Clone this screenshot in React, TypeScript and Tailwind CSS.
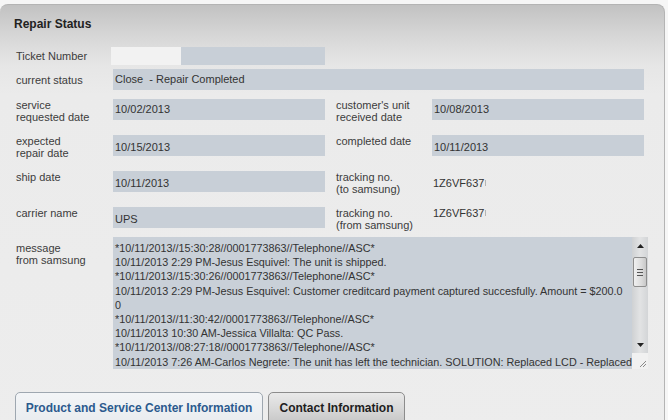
import React from "react";

const field = "bg-[#c8cfd7] text-[#333] pl-[2px] flex items-center";

function Label({ children, w = "w-[97px]", cls = "" }: { children: React.ReactNode; w?: string; cls?: string }) {
  return <div className={`${w} shrink-0 text-[#3c3c3c] leading-[12px] ${cls}`}>{children}</div>;
}

function Arrow({ up }: { up: boolean }) {
  return (
    <svg width="7" height="4" viewBox="0 0 7 4">
      {up ? <polygon points="0,4 7,4 3.5,0" fill="#222" /> : <polygon points="0,0 7,0 3.5,4" fill="#222" />}
    </svg>
  );
}

function Tracking({ cls }: { cls: string }) {
  return (
    <div className={`flex items-center pl-[1px] leading-[14px] text-[#333] ${cls}`}>
      <span>1Z6VF637</span>
      <span className="ml-[1px] h-[6px] w-[1px] bg-[#b5b5b5]" />
    </div>
  );
}

export default function App() {
  const lines = [
    "*10/11/2013//15:30:28//0001773863//Telephone//ASC*",
    "10/11/2013 2:29 PM-Jesus Esquivel: The unit is shipped.",
    "*10/11/2013//15:30:26//0001773863//Telephone//ASC*",
    "10/11/2013 2:29 PM-Jesus Esquivel: Customer creditcard payment captured succesfully. Amount = $200.0",
    "0",
    "*10/11/2013//11:30:42//0001773863//Telephone//ASC*",
    "10/11/2013 10:30 AM-Jessica Villalta: QC Pass.",
    "*10/11/2013//08:27:18//0001773863//Telephone//ASC*",
    "10/11/2013 7:26 AM-Carlos Negrete: The unit has left the technician. SOLUTION: Replaced LCD - Replaced",
  ];
  return (
    <div className="h-[420px] w-[668px] overflow-hidden bg-[#f6f6f6] pt-[4px] pr-[3px] text-[11px] [font-family:'Liberation_Sans',Arial,sans-serif]">
      <div className="h-[440px] rounded-t-[8px] border-t border-r border-[#b4b4b4] bg-[linear-gradient(to_bottom,#c2c2c2_0px,#d6d6d6_30px,#e6e6e6_60px,#ebebeb_90px,#ededed_100%)] pl-[14px] pt-[12px]">
        <div className="text-[12px] font-bold leading-[14px] text-[#222]">Repair Status</div>

        <div className="pl-[2px]">
          {/* Ticket */}
          <div className="mt-[16px] flex h-[18px] items-center">
            <Label w="w-[95px]">Ticket Number</Label>
            <div className="h-[18px] w-[70px] bg-[#f2f2f2]" />
            <div className="h-[18px] w-[144px] bg-[#c8cfd7]" />
          </div>

          {/* Status */}
          <div className="mt-[4px] flex h-[21px] items-center">
            <Label>current status</Label>
            <div className={`${field} h-[21px] w-[531px] whitespace-pre`}>Close  - Repair Completed</div>
          </div>

          {/* Service */}
          <div className="mt-[9px] flex h-[21px] items-start">
            <Label>service<br />requested date</Label>
            <div className={`${field} h-[21px] w-[212px]`}>10/02/2013</div>
            <div className="w-[11px]" />
            <Label w="w-[96px]">customer's unit<br />received date</Label>
            <div className={`${field} h-[21px] w-[212px] pl-[1px]`}>10/08/2013</div>
          </div>

          {/* Expected */}
          <div className="mt-[15px] flex h-[21px] items-start">
            <Label>expected<br />repair date</Label>
            <div className={`${field} h-[21px] w-[212px] pt-[3px]`}>10/15/2013</div>
            <div className="w-[11px]" />
            <Label w="w-[96px]">completed date</Label>
            <div className={`${field} h-[21px] w-[212px] pl-[1px] pt-[3px]`}>10/11/2013</div>
          </div>

          {/* Ship */}
          <div className="mt-[15px] flex h-[21px] items-start">
            <Label>ship date</Label>
            <div className={`${field} h-[21px] w-[212px] pt-[3px]`}>10/11/2013</div>
            <div className="w-[11px]" />
            <Label w="w-[96px]">tracking no.<br />(to samsung)</Label>
            <Tracking cls="mt-[5px]" />
          </div>

          {/* Carrier */}
          <div className="mt-[15px] flex h-[21px] items-start">
            <Label>carrier name</Label>
            <div className={`${field} h-[21px] w-[212px] pt-[3px]`}>UPS</div>
            <div className="w-[11px]" />
            <Label w="w-[96px]">tracking no.<br />(from samsung)</Label>
            <Tracking cls="-mt-[1px]" />
          </div>

          {/* Message */}
          <div className="mt-[9px] flex items-start">
            <Label cls="pt-[5px]">message<br />from samsung</Label>
            <div className="flex h-[132px] w-[535px] bg-[#c9d0d8]">
              <div className="min-w-0 flex-1 overflow-hidden whitespace-pre pl-[2px] pt-[4px] text-[10.8px] leading-[14.2px] text-[#333]">
                {lines.map((l, i) => (
                  <div key={i}>{l}</div>
                ))}
              </div>
              <div className="flex w-[16px] shrink-0 flex-col bg-[linear-gradient(to_right,#cfd1d3,#e2e3e4_50%,#d3d5d7)]">
                <div className="flex h-[17px] items-center justify-center">
                  <Arrow up />
                </div>
                <div className="mx-[1px] mt-[3px] flex h-[30px] flex-col items-center justify-center gap-[2px] rounded-[2px] border border-[#8e8e8e] bg-[linear-gradient(to_right,#f0f0f0,#dcdcdc_60%,#c8c8c8)]">
                  <div className="h-[1px] w-[6px] bg-[#555]" />
                  <div className="h-[1px] w-[6px] bg-[#555]" />
                  <div className="h-[1px] w-[6px] bg-[#555]" />
                </div>
                <div className="flex-1" />
                <div className="flex h-[16px] items-center justify-center">
                  <Arrow up={false} />
                </div>
                <div className="relative h-[16px] bg-[#f1f1f1]">
                  <svg className="absolute bottom-[1px] right-[1px]" width="9" height="9" viewBox="0 0 9 9">
                    <line x1="8" y1="2" x2="2" y2="8" stroke="#8a8a8a" strokeWidth="1" />
                    <line x1="8" y1="5" x2="5" y2="8" stroke="#8a8a8a" strokeWidth="1" />
                  </svg>
                </div>
              </div>
            </div>
          </div>
        </div>

        {/* Tabs */}
        <div className="ml-[1px] mt-[23px] flex gap-[5px]">
          <div className="h-[34px] w-[248px] rounded-t-[5px] border border-[#9ea7b0] bg-[linear-gradient(to_bottom,#f3f5f7,#e8ebee)] pt-[8px] text-center text-[12px] font-bold leading-[14px] text-[#2b5a8e]">
            Product and Service Center Information
          </div>
          <div className="h-[34px] w-[137px] rounded-t-[5px] border border-[#8c8c8c] bg-[linear-gradient(to_bottom,#e9e9e9,#d8d8d8_50%,#c4c4c4)] pt-[8px] text-center text-[12px] font-bold leading-[14px] text-[#1e1e1e]">
            Contact Information
          </div>
        </div>
      </div>
    </div>
  );
}
